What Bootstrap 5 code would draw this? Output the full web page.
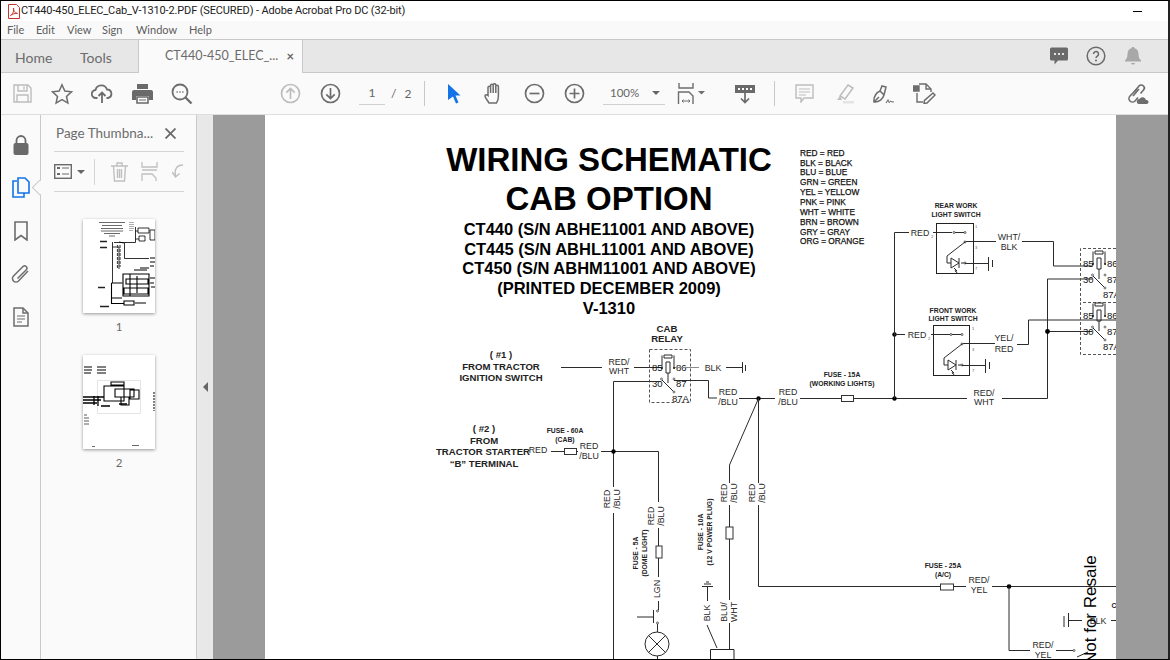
<!DOCTYPE html>
<html lang="en">
<head>
  <meta charset="UTF-8" />
  <meta name="viewport" content="width=device-width, initial-scale=1.0"/>
  <title>CT440-450_ELEC_Cab_V-1310-2.PDF (SECURED) - Adobe Acrobat Pro DC (32-bit)</title>
  <link href="https://cdn.jsdelivr.net/npm/bootstrap@5.3.0/dist/css/bootstrap.min.css" rel="stylesheet"/>
  <style>
    html, body { height: 100%; overflow: hidden; }
    body { font-family: Lato, Roboto, "Liberation Sans", sans-serif; background: #fff; }
    svg { display: block; }
    .win-frame { height: 660px; border-top: 1px solid #000; border-left: 1px solid #000; border-right: 2px solid #222; border-bottom: 1px solid #000; }
    .title-row { height: 20px; font-family: Roboto, "Liberation Sans", sans-serif; font-size: 11px; letter-spacing: -.14px; color: #222; padding-left: 6px; background: #fff; }
    .min-dash { width: 9px; height: 1px; background: #000; margin-right: 26px; }
    .menu-row { height: 18px; background: #f9f9f9; font-size: 11px; color: #5c5c5c; }
    .menu-file { margin-left: 6px; width: 29px; }
    .menu-edit { width: 31px; }
    .menu-view { width: 35px; }
    .menu-sign { width: 34px; }
    .menu-window { width: 53px; }
    .tab-row { height: 34px; background: #e7e7e7; border-top: 1px solid #c9c9c9; border-bottom: 1px solid #c9c9c9; font-size: 14px; color: #6b6b6b; }
    .tab-home { margin-left: 14px; width: 65px; padding-top: 2px; }
    .tab-tools { width: 58px; padding-top: 2px; }
    .tab-doc { width: 165px; height: 34px; margin-bottom: -1px; background: #fafafa; border-left: 1px solid #c9c9c9; border-right: 1px solid #c9c9c9; padding-left: 26px; font-size: 12.5px; white-space: nowrap; }
    .tab-x { margin-left: auto; margin-right: 8px; font-size: 13px; font-weight: 700; color: #666; }
    .tab-tools-right { margin-right: 17px; }
    .tab-btn { width: 37px; height: 32px; }
    .tb-row { height: 42px; background: #fafafa; padding-left: 1px; border-bottom: 1px solid #dedede; }
    .tb-btn { width: 40px; height: 41px; }
    .tb-wide { width: 42px; }
    .tb-link { margin-right: 11px; }
    .gap-68 { width: 68px; }
    .gap-9 { width: 9px; }
    .gap-12 { width: 12px; }
    .gap-6 { width: 6px; }
    .tb-input { width: 26px; height: 22px; border-bottom: 1px solid #cfcfcf; font-size: 12px; color: #666; }
    .tb-total { width: 39px; padding-left: 6px; font-size: 12px; color: #666; word-spacing: 5px; }
    .tb-sep { width: 1px; height: 25px; background: #c8c8c8; }
    .tb-zoom { width: 62px; height: 22px; border-bottom: 1px solid #cfcfcf; font-size: 11.5px; color: #666; padding: 0 5px 0 7px; }
    .caret-down { width: 0; height: 0; border-left: 4px solid transparent; border-right: 4px solid transparent; border-top: 4px solid #666; }
    .work-row { height: 544px; }
    .rail { width: 40px; background: #fafafa; border-right: 1px solid #c9c9c9; position: relative; padding-top: 8px; }
    .rail-btn { height: 43px; }
    .rail-notch { position: absolute; left: 33px; top: 67px; width: 11px; height: 11px; background: #fafafa; border-left: 1px solid #c9c9c9; border-bottom: 1px solid #c9c9c9; transform: rotate(45deg); }
    .side-panel { width: 155px; background: #fafafa; padding: 0 12px 0 13px; }
    .side-head { height: 37px; border-bottom: 1px solid #d4d4d4; font-size: 13.5px; color: #6d6d6d; padding-left: 2px; }
    .side-close { margin-right: 8px; }
    .side-tools { height: 40px; border-bottom: 1px solid #d4d4d4; }
    .side-caret { margin: 0 9px 0 5px; }
    .side-sep { width: 1px; height: 26px; background: #d4d4d4; margin-right: 16px; }
    .side-trash { margin-right: 13px; }
    .side-split { margin-right: 14px; }
    .thumb-list { padding-top: 27px; gap: 16px; }
    .thumb-num { font-size: 11.5px; color: #6a6a6a; margin-top: 5px; height: 21px; text-align: center; }
    .thumb-page { width: 72px; height: 94px; background: #fff; box-shadow: 0 1px 3px rgba(0,0,0,.4); }
    .split-bar { width: 17px; background: #e8e8e8; border-left: 1px solid #c9c9c9; }
    .split-arrow { width: 0; height: 0; border-top: 5px solid transparent; border-bottom: 5px solid transparent; border-right: 5px solid #666; }
    .doc-area { background: #9b9b9b; overflow: hidden; padding-left: 52px; }
    .pdf-page { width: 851px; height: 544px; background: #fff; }
    .sch text { font-family: "Liberation Sans", Arial, sans-serif; fill: #222; }
    .sch .w { fill: none; stroke: #2b2b2b; stroke-width: 1; }
    .sch .g { fill: none; stroke: #8a8a8a; stroke-width: 1; }
    .sch .t1 { font-size: 33px; font-weight: 700; fill: #000; text-anchor: middle; }
    .sch .t2 { font-size: 16.5px; font-weight: 700; fill: #000; text-anchor: middle; }
    .sch .lg { font-size: 8.3px; fill: #111; stroke: #111; stroke-width: .25px; }
    .sch .h9 { font-size: 9.6px; font-weight: 700; text-anchor: middle; }
    .sch .h7 { font-size: 6.8px; font-weight: 700; text-anchor: middle; }
    .sch .l { font-size: 8.8px; text-anchor: middle; fill: #2a2a2a; }
    .sch .r { font-size: 9.5px; fill: #111; }
    .sch .pin { font-size: 4px; fill: #555; }
    .sch .wm { font-size: 17px; fill: #000; }
  </style>
</head>
<body>
<div class="win-frame d-flex flex-column">

  <!-- title bar -->
  <div class="title-row d-flex align-items-center flex-shrink-0">
    <svg width="14" height="15" viewBox="0 0 14 15"><path d="M1.500.500h8l3 3v11h-11z" fill="#fff" stroke="#c8342b"/><path d="M3.500 11.500c2-1 4-5 3-7.500-.5 2 1 5 4 5.500-2-.3-5 .3-7 2z" fill="none" stroke="#d2332a"/></svg>
    <span class="flex-grow-1">CT440-450_ELEC_Cab_V-1310-2.PDF (SECURED) - Adobe Acrobat Pro DC (32-bit)</span>
    <div class="min-dash"></div>
  </div>

  <!-- menu -->
  <div class="menu-row d-flex align-items-center flex-shrink-0">
    <span class="menu-file">File</span><span class="menu-edit">Edit</span><span class="menu-view">View</span><span class="menu-sign">Sign</span><span class="menu-window">Window</span><span>Help</span>
  </div>

  <!-- tabs -->
  <div class="tab-row d-flex align-items-center flex-shrink-0">
    <span class="tab-home">Home</span>
    <span class="tab-tools">Tools</span>
    <div class="tab-doc d-flex align-items-center">CT440-450_ELEC_...<span class="tab-x">×</span></div>
    <div class="tab-tools-right ms-auto d-flex align-items-center">
      <div class="tab-btn d-flex align-items-center justify-content-center">
        <svg width="20" height="20" viewBox="0 0 20 20"><path d="M2.500 1.500h15a1.500 1.500 0 0 1 1.500 1.500v10a1.500 1.500 0 0 1-1.500 1.500H9l-3.500 4v-4h-3A1.500 1.500 0 0 1 1 13V3a1.500 1.500 0 0 1 1.500-1.500z" fill="#6a6a6a"/><circle cx="6" cy="8" r="1.100" fill="#fff"/><circle cx="10" cy="8" r="1.100" fill="#fff"/><circle cx="14" cy="8" r="1.100" fill="#fff"/></svg>
      </div>
      <div class="tab-btn d-flex align-items-center justify-content-center">
        <svg width="20" height="20" viewBox="0 0 20 20"><circle cx="10" cy="10" r="8.800" fill="none" stroke="#6a6a6a" stroke-width="1.500"/><path d="M7.500 8a2.500 2.500 0 1 1 3.800 2.100c-.9.6-1.300 1-1.300 2" fill="none" stroke="#6a6a6a" stroke-width="1.500"/><circle cx="10" cy="14.500" r="1" fill="#6a6a6a"/></svg>
      </div>
      <div class="tab-btn d-flex align-items-center justify-content-center">
        <svg width="18" height="20" viewBox="0 0 18 20"><path d="M9 1c.9 0 1.400.5 1.500 1.300C13.200 3 14.500 5 14.500 8c0 3.500 1 5 2.500 6.500v1H1v-1C2.500 13 3.500 11.500 3.500 8c0-3 1.300-5 4-5.700C7.600 1.500 8.100 1 9 1z" fill="#a8a8a8"/><path d="M7 17h4a2 1.500 0 0 1-4 0z" fill="#a8a8a8"/></svg>
      </div>
    </div>
  </div>

  <!-- toolbar -->
  <div class="tb-row d-flex align-items-center flex-shrink-0">
    <div class="tb-btn d-flex align-items-center justify-content-center">
      <svg width="19" height="19" viewBox="0 0 19 19" fill="none" stroke="#bdbdbd" stroke-width="1.400"><path d="M1 1h14l3 3v14H1z"/><path d="M5 1v6h9V1M11 2.500v3M4 18v-7h11v7"/></svg>
    </div>
    <div class="tb-btn d-flex align-items-center justify-content-center">
      <svg width="22" height="22" viewBox="0 0 22 22" fill="none" stroke="#6d6d6d" stroke-width="1.500"><path d="M11 1.800l2.800 6.300 6.700.7-5 4.600 1.400 6.700-5.900-3.400-5.900 3.400 1.400-6.700-5-4.600 6.700-.7z"/></svg>
    </div>
    <div class="tb-btn d-flex align-items-center justify-content-center">
      <svg width="22" height="20" viewBox="0 0 22 20" fill="none" stroke="#6d6d6d" stroke-width="1.800"><path d="M6.500 14H5A4 4 0 0 1 4.500 6 6 6 0 0 1 16 5.500 4.300 4.300 0 0 1 17 14h-1.500"/><path d="M11 19V9M7.500 12L11 8.500l3.500 3.500"/></svg>
    </div>
    <div class="tb-btn d-flex align-items-center justify-content-center">
      <svg width="21" height="20" viewBox="0 0 21 20"><path d="M5 0h11v5H5z" fill="#6a6a6a"/><path d="M2 6h17a2 2 0 0 1 2 2v8h-4v-4H4v4H0V8a2 2 0 0 1 2-2z" fill="#6a6a6a"/><path d="M5 13h11v6H5z" fill="none" stroke="#6a6a6a" stroke-width="1.600"/><path d="M7 16h7" stroke="#6a6a6a"/></svg>
    </div>
    <div class="tb-btn d-flex align-items-center justify-content-center">
      <svg width="22" height="22" viewBox="0 0 22 22" fill="none" stroke="#6d6d6d" stroke-width="1.800"><circle cx="9" cy="9" r="7.500"/><path d="M14.500 14.500l6 6" stroke-width="2.400"/><path d="M5.500 9h1.300M8.400 9h1.300M11.200 9h1.300" stroke-width="1.500"/></svg>
    </div>
    <div class="gap-68"></div>
    <div class="tb-btn d-flex align-items-center justify-content-center">
      <svg width="21" height="21" viewBox="0 0 21 21" fill="none" stroke="#bdbdbd" stroke-width="1.700"><circle cx="10.500" cy="10.500" r="9"/><path d="M10.500 16V5.500M6.300 9.700l4.200-4.200 4.200 4.200"/></svg>
    </div>
    <div class="tb-btn d-flex align-items-center justify-content-center">
      <svg width="21" height="21" viewBox="0 0 21 21" fill="none" stroke="#6d6d6d" stroke-width="1.700"><circle cx="10.500" cy="10.500" r="9"/><path d="M10.500 5v10.500M6.300 11.300l4.200 4.200 4.200-4.200"/></svg>
    </div>
    <div class="gap-9"></div>
    <div class="tb-input d-flex align-items-center justify-content-center">1</div>
    <div class="tb-total">/ 2</div>
    <div class="tb-sep"></div>
    <div class="gap-9"></div>
    <div class="tb-btn d-flex align-items-center justify-content-center">
      <svg width="14" height="20" viewBox="0 0 14 20"><path d="M1 0l12.500 11.500H8.500l3 7-2.500 1-3-7L1 16z" fill="#1473e6"/></svg>
    </div>
    <div class="tb-btn d-flex align-items-center justify-content-center">
      <svg width="21" height="22" viewBox="0 0 21 22" fill="none" stroke="#6d6d6d" stroke-width="1.500"><path d="M5 20c-1-2-4-5-4-7s2-1.500 3-.5V4.500a1.300 1.300 0 0 1 2.600 0V10V2.500a1.300 1.300 0 0 1 2.600 0V10V2a1.300 1.300 0 0 1 2.600 0v8V3.500a1.300 1.300 0 0 1 2.600 0V13c0 3-.5 5-2 7z"/></svg>
    </div>
    <div class="tb-btn d-flex align-items-center justify-content-center">
      <svg width="21" height="21" viewBox="0 0 21 21" fill="none" stroke="#6d6d6d" stroke-width="1.700"><circle cx="10.500" cy="10.500" r="9"/><path d="M5.500 10.500h10"/></svg>
    </div>
    <div class="tb-btn d-flex align-items-center justify-content-center">
      <svg width="21" height="21" viewBox="0 0 21 21" fill="none" stroke="#6d6d6d" stroke-width="1.700"><circle cx="10.500" cy="10.500" r="9"/><path d="M5.500 10.500h10M10.500 5.500v10"/></svg>
    </div>
    <div class="gap-9"></div>
    <div class="tb-zoom d-flex align-items-center justify-content-between"><span>100%</span><span class="caret-down"></span></div>
    <div class="gap-12"></div>
    <div class="tb-btn tb-wide d-flex align-items-center">
      <svg width="29" height="22" viewBox="0 0 29 22" fill="none" stroke="#6d6d6d" stroke-width="1.400"><path d="M2 0v5h14V0M1.500 21V9H12l4 4v8"/><path d="M5 18h8M5 18l1.500-1.500M5 18l1.500 1.500M13 18l-1.500-1.500M13 18l-1.500 1.500" stroke-width="1"/><path d="M21 8h7l-3.500 3.500z" fill="#6d6d6d" stroke="none"/></svg>
    </div>
    <div class="gap-6"></div>
    <div class="tb-btn d-flex align-items-center justify-content-center">
      <svg width="20" height="20" viewBox="0 0 20 20"><path d="M0 1h20v8H0z" fill="#6a6a6a"/><path d="M3 4h2v2H3zM7 4h2v2H7zM11 4h2v2h-2zM15 4h2v2h-2z" fill="#fff"/><path d="M10 9v9M6 14.500l4 4 4-4" fill="none" stroke="#6a6a6a" stroke-width="1.700"/></svg>
    </div>
    <div class="gap-9"></div>
    <div class="tb-sep"></div>
    <div class="gap-9"></div>
    <div class="tb-btn d-flex align-items-center justify-content-center">
      <svg width="19" height="19" viewBox="0 0 19 19" fill="none" stroke="#bdbdbd" stroke-width="1.400"><path d="M1 1h17v13H9l-3 4v-4H1z"/><path d="M4 5h11M4 8h11M4 11h7" stroke-width="1"/></svg>
    </div>
    <div class="tb-btn d-flex align-items-center justify-content-center">
      <svg width="21" height="20" viewBox="0 0 21 20"><path d="M14 1l5 3-8 11-5-3z" fill="none" stroke="#bdbdbd" stroke-width="1.500"/><path d="M6 12l-3 4h5z" fill="#bdbdbd"/><path d="M9 17h11v2.500H9z" fill="#e4e4e4"/></svg>
    </div>
    <div class="tb-btn d-flex align-items-center justify-content-center">
      <svg width="22" height="20" viewBox="0 0 22 20" fill="none" stroke="#6d6d6d" stroke-width="1.500"><path d="M1 18c-.5-5 2-9 6-11l4 4c-1 4-5 7.500-10 7zM1 18l5-5M7 7l2-5 4 1-2 8"/><path d="M13 19l2-3 1.500 3M17 17c1 1 2 1 4 1" stroke-width="1.100"/></svg>
    </div>
    <div class="tb-btn d-flex align-items-center justify-content-center">
      <svg width="23" height="21" viewBox="0 0 23 21" fill="none" stroke="#6d6d6d" stroke-width="1.400"><path d="M0 3h6v5H0z" fill="#6d6d6d"/><path d="M6 1h7l5 5v3M4 10v9h6"/><path d="M13 1v5h5"/><path d="M20 10l2 2-8 8-3 .5.500-3z" stroke-width="1.500"/></svg>
    </div>
    <div class="tb-btn tb-link ms-auto d-flex align-items-center justify-content-center">
      <svg width="23" height="22" viewBox="0 0 23 22" fill="none" stroke="#6d6d6d" stroke-width="1.600"><path d="M8 9l5-6a3 3 0 0 1 4.500 4l-3 3.500"/><path d="M11 6L4 13a3.500 3.500 0 0 0 5 5l3-3.500"/><path d="M7 13l6-7"/><path d="M13 21a2.500 2.500 0 0 1 .5-5 3.500 3.500 0 0 1 6.500 1 2 2 0 0 1 1 4z" fill="#6d6d6d" stroke="none"/></svg>
    </div>
  </div>

  <div class="work-row d-flex flex-grow-1">
    <!-- icon rail -->
    <div class="rail flex-shrink-0">
      <div class="rail-btn d-flex align-items-center justify-content-center">
        <svg width="16" height="20" viewBox="0 0 16 20"><path d="M3.500 9V5.500a4.500 4.500 0 0 1 9 0V9" fill="none" stroke="#6a6a6a" stroke-width="1.800"/><rect x="0.500" y="8" width="15" height="12" rx="2" fill="#6a6a6a"/></svg>
      </div>
      <div class="rail-btn d-flex align-items-center justify-content-center">
        <svg width="18" height="21" viewBox="0 0 18 21" fill="none" stroke="#1473e6" stroke-width="1.600"><path d="M5 4H1v16h11v-4"/><path d="M6 1h7l4 4v11H6z"/></svg>
      </div>
      <div class="rail-btn d-flex align-items-center justify-content-center">
        <svg width="14" height="20" viewBox="0 0 14 20" fill="none" stroke="#6d6d6d" stroke-width="1.600"><path d="M1 1h12v18l-6-4.500L1 19z"/></svg>
      </div>
      <div class="rail-btn d-flex align-items-center justify-content-center">
        <svg width="19" height="20" viewBox="0 0 19 20" fill="none" stroke="#6d6d6d" stroke-width="1.500"><path d="M17 7L7.500 17a3.500 3.500 0 0 1-5-5L12 2.500a2.300 2.300 0 0 1 3.300 3.200L6.500 14.500"/></svg>
      </div>
      <div class="rail-btn d-flex align-items-center justify-content-center">
        <svg width="16" height="20" viewBox="0 0 16 20" fill="none" stroke="#6d6d6d" stroke-width="1.500"><path d="M1 1h9l5 5v13H1z"/><path d="M4 9h8M4 12h8M4 15h5" stroke-width="1.100"/><path d="M10 1v5h5"/></svg>
      </div>
      <div class="rail-notch"></div>
    </div>

    <!-- thumbnails panel -->
    <div class="side-panel flex-shrink-0">
      <div class="side-head d-flex align-items-center justify-content-between">
        <span>Page Thumbna...</span>
        <svg class="side-close" width="11" height="11" viewBox="0 0 11 11" stroke="#6a6a6a" stroke-width="1.800"><path d="M.5.500l10 10M10.500.500l-10 10"/></svg>
      </div>
      <div class="side-tools d-flex align-items-center">
        <svg width="18" height="15" viewBox="0 0 18 15" fill="none" stroke="#6a6a6a" stroke-width="1.400"><rect x="0.700" y="0.700" width="16.600" height="13.600"/><path d="M3 4h3M3 10h3" stroke-width="2.200"/><path d="M8 4h7M8 10h7" stroke-width="1.200"/></svg>
        <span class="caret-down side-caret"></span>
        <div class="side-sep"></div>
        <svg class="side-trash" width="17" height="20" viewBox="0 0 17 20" fill="none" stroke="#c0c0c0" stroke-width="1.400"><path d="M0 4h17M6 4V1h5v3M2.500 4l1 15h10l1-15M6.500 7v9M8.500 7v9M10.500 7v9"/></svg>
        <svg class="side-split" width="17" height="19" viewBox="0 0 17 19" fill="none" stroke="#c0c0c0" stroke-width="1.300"><path d="M1 0v5h15V0M1 8h15" /><path d="M1 19v-7h10l4 4v3"/></svg>
        <svg width="11" height="18" viewBox="0 0 11 18" fill="none" stroke="#c0c0c0" stroke-width="1.500"><path d="M11 2C5 2 2 6 3.500 13"/><path d="M0 9l3.500 5 4-3.500"/></svg>
      </div>
      <div class="thumb-list d-flex flex-column align-items-center">
        <div>
          <div class="thumb-page">
            <svg width="72" height="94" viewBox="0 0 72 94" fill="none" stroke="#000" stroke-width=".8">
              <path d="M16 3.500h26M19 6.500h20M18 9.500h22M18 12h22M21 14.500h16M26 17h6" stroke="#444"/>
              <path d="M46 3.500h5M46 5.500h5M46 7.500h5M46 9.500h5M46 11.500h4" stroke="#999"/>
              <path d="M17 22.500h7M17 28.500h7M15 68.500h7M17 87.500h9" stroke="#222" stroke-width="1.400"/>
              <path d="M52.500 8v15.500H31M52.500 12H55M52.500 20H56M55 9h11v5H55zM56 17h6v5h-6zM67 11h5v10h-5z"/>
              <path d="M29.500 23V64M29.500 28H36M36 23l5 1M41.500 24v15.500H66M36 28v22" />
              <path d="M34.500 26v24M37 26v22" stroke="#444" stroke-width="1.200" stroke-dasharray="3 1"/>
              <path d="M67 39h5M67 43h5M67 47h4M57 49h9" stroke-width="1.200"/>
              <path d="M51 51h13M40 55h26v22H40zM43 60h22v5H43zM41 69h24v6H41zM47 55v22M54 57v17" stroke-width="1.100"/>
              <path d="M67 59h5M67 64h4M68 68h4" stroke-width="1"/>
              <path d="M28.500 64h11M28.500 64v20.500H41M41 82h10v4H41zM52 84h11M29 79h10" stroke-width="1.100"/>
            </svg>
          </div>
          <div class="thumb-num">1</div>
        </div>
        <div>
          <div class="thumb-page">
            <svg width="72" height="94" viewBox="0 0 72 94" fill="none" stroke="#000" stroke-width=".8">
              <path d="M1 12h8M1 15h8M1 18h7M14 12h9M14 15h9M14 18h9" stroke-width="1.200"/>
              <path d="M14.500 25.500h43v33h-43z" stroke="#ddd"/>
              <path d="M28 27h13v3H28zM21 31h20v15H21zM32 34h19v8H32zM47 35h9v9h-9zM38 42h8v8h-8z" stroke-width="1.100"/>
              <path d="M0 42h21M0 45h18M0 48h14M11 41v9M15 41v10M18 51h9M36 49h8" stroke-width="1.300"/>
              <path d="M1 60h3M1 63h5M1 66h5M1 69h5" stroke="#333"/>
              <path d="M71 37v19" stroke="#555" stroke-width="1.500" stroke-dasharray="2 1"/>
              <path d="M9 91.500h3M49 90.500h7" stroke="#444"/>
            </svg>
          </div>
          <div class="thumb-num">2</div>
        </div>
      </div>
    </div>

    <div class="split-bar flex-shrink-0 d-flex align-items-center justify-content-center">
      <span class="split-arrow"></span>
    </div>

    <!-- document -->
    <div class="doc-area flex-grow-1">
      <div class="pdf-page">
        <svg class="sch" width="851" height="544" viewBox="265 115 851 544">
          <defs>
            <g id="relay">
              <path class="w" d="M15 6h8v3h-8zM13 6.500V19M25 6.500V19M17 13h4v11h-4zM19 24v10M12.500 30.500L25 43"/>
              <path class="w" d="M13 19h-1M25 19h1"/>
              <circle cx="12.500" cy="30" r="1" fill="#fff" stroke="#333" stroke-width=".7"/>
              <circle cx="25" cy="30" r="1" fill="#fff" stroke="#333" stroke-width=".7"/>
              <circle cx="25" cy="43" r="1" fill="#fff" stroke="#333" stroke-width=".7"/>
              <circle cx="13" cy="19" r="1" fill="#222"/>
              <circle cx="25" cy="19" r="1" fill="#222"/>
              <text class="r" x="3" y="22">85</text>
              <text class="r" x="27" y="22">86</text>
              <text class="r" x="3" y="38">30</text>
              <text class="r" x="27" y="38">87</text>
              <text class="r" x="23" y="53">87A</text>
            </g>
            <g id="lite-switch">
              <circle cx="18" cy="9.500" r="1" fill="#fff" stroke="#333" stroke-width=".8"/>
              <circle cx="29" cy="9.500" r="1" fill="#fff" stroke="#333" stroke-width=".8"/>
              <circle cx="29" cy="19" r="1" fill="#fff" stroke="#333" stroke-width=".8"/>
              <circle cx="29" cy="40" r="1" fill="#fff" stroke="#333" stroke-width=".8"/>
              <path class="w" d="M19 9.500h9M29 19L11 33v7h4M15 35l8 5-8 5zM23 35v10M25 40h3"/>
              <path class="w" d="M18 45l3 3-2-.2 3 3"/>
              <text class="pin" x="39" y="5">1</text>
              <text class="pin" x="-5" y="15">2</text>
              <text class="pin" x="39" y="26">3</text>
              <text class="pin" x="39" y="47">7</text>
            </g>
          </defs>

          <!-- heading -->
          <text class="t1" x="609" y="171">WIRING SCHEMATIC</text>
          <text class="t1" x="609" y="210">CAB OPTION</text>
          <text class="t2" x="609" y="235">CT440 (S/N ABHE11001 AND ABOVE)</text>
          <text class="t2" x="609" y="255">CT445 (S/N ABHL11001 AND ABOVE)</text>
          <text class="t2" x="609" y="274">CT450 (S/N ABHM11001 AND ABOVE)</text>
          <text class="t2" x="609" y="294">(PRINTED DECEMBER 2009)</text>
          <text class="t2" x="609" y="314">V-1310</text>

          <!-- colour key -->
          <text class="lg" x="800" y="156">RED = RED</text>
          <text class="lg" x="800" y="166">BLK = BLACK</text>
          <text class="lg" x="800" y="175">BLU = BLUE</text>
          <text class="lg" x="800" y="185">GRN = GREEN</text>
          <text class="lg" x="800" y="195">YEL = YELLOW</text>
          <text class="lg" x="800" y="205">PNK = PINK</text>
          <text class="lg" x="800" y="215">WHT = WHITE</text>
          <text class="lg" x="800" y="225">BRN = BROWN</text>
          <text class="lg" x="800" y="235">GRY = GRAY</text>
          <text class="lg" x="800" y="244">ORG = ORANGE</text>

          <!-- relay inputs -->
          <text class="h9" x="501" y="358">( #1 )</text>
          <text class="h9" x="501" y="370">FROM TRACTOR</text>
          <text class="h9" x="501" y="381">IGNITION SWITCH</text>
          <text class="h9" x="484" y="432">( #2 )</text>
          <text class="h9" x="484" y="444">FROM</text>
          <text class="h9" x="483" y="455">TRACTOR STARTER</text>
          <text class="h9" x="484" y="467">“B” TERMINAL</text>
          <text class="h9" x="667" y="332">CAB</text>
          <text class="h9" x="667" y="342">RELAY</text>

          <path class="w" d="M561 367.500h41M634 367.500h27"/>
          <rect x="649.500" y="349.500" width="41" height="53" fill="none" stroke="#555" stroke-dasharray="3 2"/>
          <use href="#relay" x="649" y="349"/>
          <text class="l" x="619" y="365">RED/</text>
          <text class="l" x="619" y="374">WHT</text>
          <path class="g" d="M675 367.500h24"/>
          <text class="l" x="713" y="371">BLK</text>
          <path class="w" d="M726 367.500h16M742.500 362v11M745.500 365v6"/>

          <path class="w" d="M613.500 487V381.500H661M674 380.500h34.500V398H717M739 398.500h36"/>
          <text class="l" x="728" y="395">RED</text>
          <text class="l" x="728" y="405">/BLU</text>
          <text class="l" x="788" y="395">RED</text>
          <text class="l" x="788" y="405">/BLU</text>
          <circle cx="758.500" cy="398.500" r="2.200" fill="#000"/>
          <path class="w" d="M758.500 398.500V483M758.500 505V586.500H940M953 586.500h13M992 586.500h124M758.500 398.500L729.500 465V483M729.500 505V527M729.500 539V600M729.500 623V649"/>
          <rect x="726" y="527" width="7" height="12" fill="#fff" stroke="#333"/>

          <!-- fuse 60A branch -->
          <text class="h7" x="565" y="433">FUSE - 60A</text>
          <text class="h7" x="565" y="442">(CAB)</text>
          <text class="l" x="538" y="453">RED</text>
          <path class="w" d="M551 451.500h13M577 451.500h1"/>
          <rect x="564.500" y="448.500" width="12" height="6" fill="#fff" stroke="#333"/>
          <text class="l" x="589" y="449">RED</text>
          <text class="l" x="589" y="459">/BLU</text>
          <path class="w" d="M601 451.500h57.500V502M658.500 528V546M658.500 558V577M658.500 601V610M613.500 513V660"/>
          <circle cx="613.500" cy="451.500" r="2.200" fill="#000"/>
          <rect x="656" y="546" width="6" height="12" fill="#fff" stroke="#333"/>

          <!-- rotated labels -->
          <g>
            <text class="l" transform="translate(610 499) rotate(-90)">RED</text>
            <text class="l" transform="translate(619.500 499) rotate(-90)">/BLU</text>
            <text class="l" transform="translate(654 516) rotate(-90)">RED</text>
            <text class="l" transform="translate(663.500 516) rotate(-90)">/BLU</text>
            <text class="l" transform="translate(727 493) rotate(-90)">RED</text>
            <text class="l" transform="translate(736.500 493) rotate(-90)">/BLU</text>
            <text class="l" transform="translate(755 493) rotate(-90)">RED</text>
            <text class="l" transform="translate(765 493) rotate(-90)">/BLU</text>
            <text class="l" transform="translate(660 589) rotate(-90)">LGN</text>
            <text class="l" transform="translate(709.500 613) rotate(-90)">BLK</text>
            <text class="l" transform="translate(727 612) rotate(-90)">BLU/</text>
            <text class="l" transform="translate(736.500 612) rotate(-90)">WHT</text>
            <text class="h7" transform="translate(638 553) rotate(-90)">FUSE - 5A</text>
            <text class="h7" transform="translate(647 553) rotate(-90)">(DOME LIGHT)</text>
            <text class="h7" transform="translate(703 532) rotate(-90)">FUSE - 10A</text>
            <text class="h7" transform="translate(711.500 532) rotate(-90)">(12 V POWER PLUG)</text>
          </g>

          <!-- dome light -->
          <path class="w" d="M653.500 610v13M637 617h16.500"/>
          <circle cx="657.500" cy="611" r="1" fill="#fff" stroke="#333" stroke-width=".8"/>
          <circle cx="657.500" cy="623" r="1" fill="#fff" stroke="#333" stroke-width=".8"/>
          <path class="w" d="M657.500 624v8M657.500 656v4"/>
          <circle class="w" cx="657" cy="644" r="12"/>
          <path class="w" d="M648.500 635.500l17 17M665.500 635.500l-17 17"/>

          <!-- plug ground -->
          <path class="w" d="M702 586.500h11M704 584h7M706 582h3M707.500 587v14M707 625l10 23"/>
          <path d="M710.500 649.500h23.500V660H710.500z" fill="#fff" stroke="#222"/>

          <!-- work light fuse + feed -->
          <text class="h7" x="842" y="377">FUSE - 15A</text>
          <text class="h7" x="842" y="386">(WORKING LIGHTS)</text>
          <rect x="841.500" y="395.500" width="12" height="6" fill="#fff" stroke="#333"/>
          <path d="M800 398.500h41M854 398.500h113M1002 398.500h45.500V279H1092M1047.500 331.500H1092" class="w"/>
          <circle cx="894.500" cy="398.500" r="2.200" fill="#000"/>
          <circle cx="894.500" cy="334.500" r="2.200" fill="#000"/>
          <circle cx="1047.500" cy="331.500" r="2.400" fill="#000"/>
          <text class="l" x="984" y="396">RED/</text>
          <text class="l" x="984" y="405">WHT</text>

          <!-- rear switch -->
          <path class="w" d="M894.500 398.500V232.500H909M933 232.500h19M964 241.500h32M1022 241.500h31.500V266H1092"/>
          <text class="h7" x="956" y="208">REAR WORK</text>
          <text class="h7" x="956" y="217">LIGHT SWITCH</text>
          <text class="l" x="920" y="236">RED</text>
          <rect x="936.500" y="223.500" width="37" height="50" fill="none" stroke="#222"/>
          <use href="#lite-switch" x="936" y="223"/>
          <path class="w" d="M965 263.500h23M988.500 257v14M992.500 260v7"/>
          <text class="l" x="1009" y="240">WHT/</text>
          <text class="l" x="1009" y="250">BLK</text>

          <!-- front switch -->
          <path class="w" d="M894.500 334.500H905M931 334.500h19M962 343.500h33M1017 344.500h11.500V320H1116"/>
          <text class="h7" x="953" y="313">FRONT WORK</text>
          <text class="h7" x="953" y="321">LIGHT SWITCH</text>
          <text class="l" x="917" y="338">RED</text>
          <rect x="933.500" y="325.500" width="36" height="50" fill="none" stroke="#222"/>
          <use href="#lite-switch" x="933" y="325"/>
          <path class="w" d="M962 365.500h23M985.500 359v14M989.500 362v7"/>
          <text class="l" x="1004" y="341">YEL/</text>
          <text class="l" x="1004" y="352">RED</text>

          <!-- cut-off relays -->
          <path d="M1116 248.500h-35.500v54M1116 302.500h-35.500v52h35.500" fill="none" stroke="#555" stroke-dasharray="3 2"/>
          <use href="#relay" x="1080" y="245"/>
          <use href="#relay" x="1080" y="297"/>

          <!-- A/C -->
          <text class="h7" x="943" y="568">FUSE - 25A</text>
          <text class="h7" x="943" y="577">(A/C)</text>
          <rect x="940.500" y="584" width="13" height="6" fill="#fff" stroke="#333"/>
          <text class="l" x="979" y="583">RED/</text>
          <text class="l" x="979" y="593">YEL</text>
          <circle cx="1009" cy="586.500" r="2.300" fill="#000"/>
          <path class="w" d="M1009 586.500V650.500H1030M1056 650.500h17M1077 657l11-5"/>
          <circle cx="1074" cy="650.500" r="1" fill="#fff" stroke="#333" stroke-width=".8"/>
          <text class="l" x="1043" y="648">RED/</text>
          <text class="l" x="1043" y="658">YEL</text>
          <path class="w" d="M1064 616v11M1068.500 613v14M1068 620.500h14M1111 620.500h5"/>
          <text class="l" x="1098" y="624">BLK</text>
          <text class="h7" x="1114" y="608">C</text>
          <text class="wm" transform="translate(1096 664) rotate(-90)">Not for Resale</text>
        </svg>
      </div>
    </div>
  </div>
</div>
</body>
</html>
